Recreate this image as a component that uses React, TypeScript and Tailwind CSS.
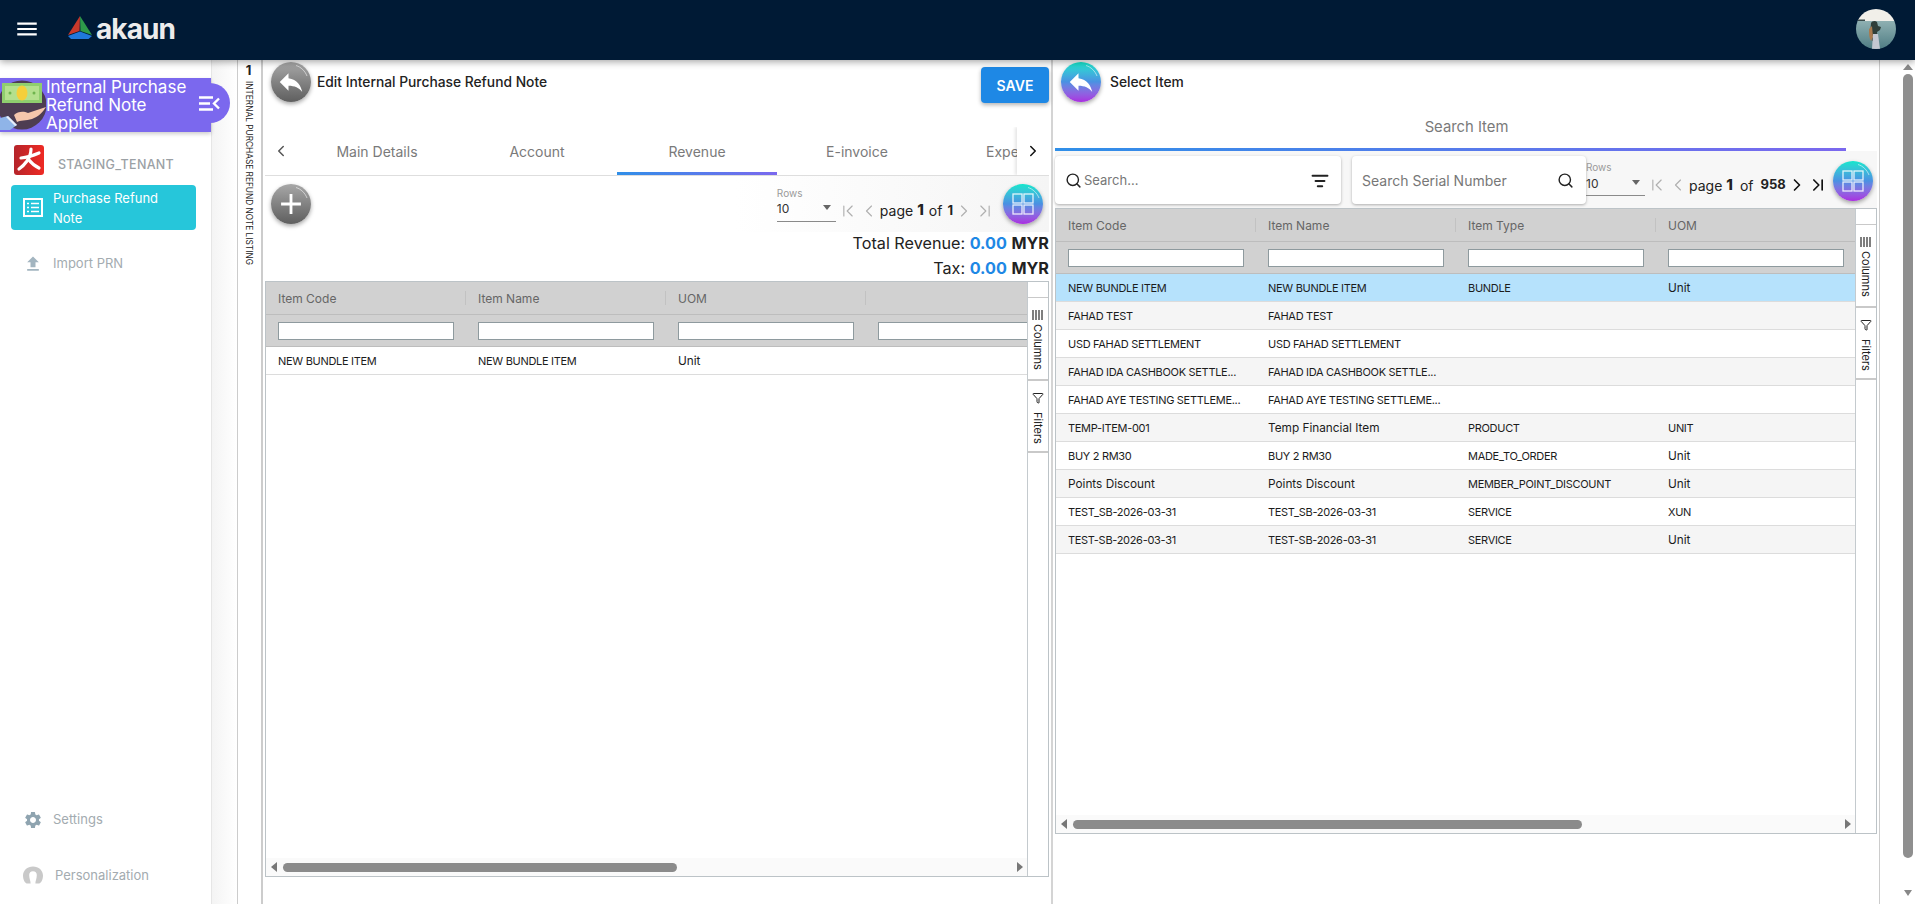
import { ChevronLeft, ChevronRight, ChevronFirst, ChevronLast, Search, ListFilter, Funnel } from 'lucide-react';
import { MdMenu, MdReply, MdAdd, MdFileUpload, MdSettings } from 'react-icons/md';

const leftRows = [['NEW BUNDLE ITEM', 'NEW BUNDLE ITEM', 'Unit', '']];

const rightRows = [
  ['NEW BUNDLE ITEM', 'NEW BUNDLE ITEM', 'BUNDLE', 'Unit'],
  ['FAHAD TEST', 'FAHAD TEST', '', ''],
  ['USD FAHAD SETTLEMENT', 'USD FAHAD SETTLEMENT', '', ''],
  ['FAHAD IDA CASHBOOK SETTLE...', 'FAHAD IDA CASHBOOK SETTLE...', '', ''],
  ['FAHAD AYE TESTING SETTLEME...', 'FAHAD AYE TESTING SETTLEME...', '', ''],
  ['TEMP-ITEM-001', 'Temp Financial Item', 'PRODUCT', 'UNIT'],
  ['BUY 2 RM30', 'BUY 2 RM30', 'MADE_TO_ORDER', 'Unit'],
  ['Points Discount', 'Points Discount', 'MEMBER_POINT_DISCOUNT', 'Unit'],
  ['TEST_SB-2026-03-31', 'TEST_SB-2026-03-31', 'SERVICE', 'XUN'],
  ['TEST-SB-2026-03-31', 'TEST-SB-2026-03-31', 'SERVICE', 'Unit'],
];

function RoundButton({ color, children }: { color: 'grey' | 'brand'; children: React.ReactNode }) {
  const bg = color === 'grey'
    ? 'bg-gradient-to-b from-[#a8a8a8] to-[#5f5f5f]'
    : 'bg-gradient-to-b from-[#10e6cc] via-[#4a90e2] to-[#a92be0]';
  return (
    <div className={`w-10 h-10 shrink-0 relative rounded-full flex items-center justify-center text-white shadow-[0_2px_4px_rgba(0,0,0,0.35)] ${bg}`}>
      {children}
      <svg width="40" height="40" viewBox="0 0 40 40" fill="none" stroke="#fff" strokeOpacity="0.55" strokeWidth="1" className="absolute left-0 top-0">
        <path d="M25 3.500c5 1.500 9 5.500 11 10.500" />
      </svg>
    </div>
  );
}

function GridIcon() {
  return (
    <svg width="24" height="24" viewBox="0 0 24 24" fill="none" stroke="#fff" strokeOpacity="0.85" strokeWidth="1.300">
      <rect x="2" y="2" width="9" height="9" />
      <rect x="13" y="2" width="9" height="9" />
      <rect x="2" y="13" width="9" height="9" />
      <rect x="13" y="13" width="9" height="9" />
    </svg>
  );
}

function Pager({ total, active, gap }: { total: string; active: boolean; gap: string }) {
  const end = active ? 'text-[#111]' : 'text-[#b0b0b0]';
  return (
    <div className="flex items-end shrink-0">
      <div className="w-[59px] mr-[2px]">
        <div className="text-[10px] leading-[12px] text-[#9a9a9a]">Rows</div>
        <div className="flex items-center justify-between h-[21px] mt-[2px] border-b border-[#8a8a8a] text-[12px] text-[#333] pr-[5px]">
          <span className="-mt-[3px]">10</span>
          <span className="w-0 h-0 -mt-[6px] border-l-[4px] border-r-[4px] border-t-[5px] border-l-transparent border-r-transparent border-t-[#666]" />
        </div>
      </div>
      <div className="flex items-center h-[24px] -mb-[1px] text-[14px] text-[#222]">
        <ChevronFirst size={20} strokeWidth={1.4} className="text-[#b0b0b0]" />
        <ChevronLeft size={20} strokeWidth={1.4} className="text-[#b0b0b0] ml-[1px]" />
        <span className="ml-[1px]">page</span>
        <b className="ml-[4px] font-extrabold text-[15px]">1</b>
        <span className={gap}>of</span>
        <b className={`${gap} font-bold text-[13px]`}>{total}</b>
        <ChevronRight size={20} strokeWidth={active ? 2 : 1.4} className={`${end} ml-[1px]`} />
        <ChevronLast size={20} strokeWidth={active ? 2 : 1.4} className={`${end} ml-[1px]`} />
      </div>
    </div>
  );
}

function SideButtons() {
  return (
    <div className="w-[21px] shrink-0 border-l border-[#c4cace] bg-white pt-[15px] text-[11px] text-[#222]">
      <div className="h-[84px] border-t border-b-2 border-[#c9c9c9] flex flex-col items-center pt-[12px] gap-[4px]">
        <svg width="12" height="10" viewBox="0 0 12 10" stroke="#555" strokeWidth="1.500"><path d="M1 0v10M4 0v10M7 0v10M10 0v10" /></svg>
        <span className="[writing-mode:vertical-rl]">Columns</span>
      </div>
      <div className="h-[72px] border-b-2 border-[#c9c9c9] flex flex-col items-center pt-[11px] gap-[8px]">
        <Funnel size={12} />
        <span className="[writing-mode:vertical-rl]">Filters</span>
      </div>
    </div>
  );
}

function HScroll({ width }: { width: string }) {
  return (
    <div className="mt-auto h-[18px] flex items-center bg-[#fafafa] pl-[5px] pr-[4px]">
      <span className="w-0 h-0 border-t-[5px] border-b-[5px] border-r-[6px] border-t-transparent border-b-transparent border-r-[#777]" />
      <div className={`h-[9px] ml-[6px] rounded-[5px] bg-[#8b8b8b] ${width}`} />
      <span className="ml-auto w-0 h-0 border-t-[5px] border-b-[5px] border-l-[6px] border-t-transparent border-b-transparent border-l-[#777]" />
    </div>
  );
}

function cellText(t: string) {
  return t === t.toUpperCase() ? 'text-[11px] tracking-[-0.3px]' : 'text-[11.800px]';
}

function DataGrid({ columns, rows, selected, thumb, height }: {
  columns: string[];
  rows: string[][];
  selected?: number;
  thumb: string;
  height: string;
}) {
  return (
    <div className={`flex border border-[#bcc3c7] overflow-hidden text-[12px] ${height}`}>
      <div className="flex-1 min-w-0 flex flex-col overflow-hidden">
        <div className="flex h-[33px] shrink-0 bg-[#d1d1d1] border-b border-[#bdbdbd] text-[#666]">
          {columns.map((c, i) => (
            <div key={i} className="w-[200px] shrink-0 px-[12px] pt-[2px] flex items-center relative">
              <span>{c}</span>
              <span className="absolute right-0 top-[9px] h-[14px] w-px bg-[#c2c2c2]" />
            </div>
          ))}
        </div>
        <div className="flex h-[32px] shrink-0 bg-[#d1d1d1] border-b border-[#bdbdbd]">
          {columns.map((_, i) => (
            <div key={i} className="w-[200px] shrink-0 px-[12px] flex items-center">
              <div className="w-[176px] h-[18px] bg-white border border-[#8e9a9e]" />
            </div>
          ))}
        </div>
        {rows.map((r, i) => (
          <div
            key={i}
            className={`flex h-[28px] shrink-0 border-b border-[#dcdcdc] text-[#1c1c1c] ${i === selected ? 'bg-[#b6e2fc]' : i % 2 === 1 ? 'bg-[#f5f5f5]' : 'bg-white'}`}
          >
            {r.map((t, j) => (
              <div key={j} className={`w-[200px] shrink-0 px-[12px] pt-[1px] leading-[16px] flex items-center whitespace-nowrap overflow-hidden ${cellText(t)}`}>{t}</div>
            ))}
          </div>
        ))}
        <HScroll width={thumb} />
      </div>
      <SideButtons />
    </div>
  );
}

function Tenant() {
  return (
    <svg width="30" height="30" viewBox="0 0 30 30" className="shrink-0">
      <defs>
        <linearGradient id="ten" x1="0" y1="0" x2="1" y2="0">
          <stop offset="0" stopColor="#b5242a" />
          <stop offset="1" stopColor="#ee2a24" />
        </linearGradient>
      </defs>
      <rect width="30" height="30" rx="3" fill="url(#ten)" />
      <g fill="none" stroke="#fff" strokeWidth="3.200" strokeLinecap="round">
        <path d="M17 4c0 5-2 9-4 12-2.500 3.500-5 6-8 8" />
        <path d="M7 13c5-.5 11-2 18-5" />
        <path d="M15 15c3 4 6 6 10 8" />
      </g>
    </svg>
  );
}

function MoneyHand() {
  return (
    <svg width="46" height="54" viewBox="0 0 46 54" className="shrink-0">
      <circle cx="22" cy="27" r="24.500" fill="#4e3d52" />
      <rect x="2" y="5" width="40" height="20" fill="#8fce6e" />
      <rect x="5" y="8" width="34" height="14" fill="#b4e08e" />
      <ellipse cx="22" cy="15" rx="5.500" ry="7.500" fill="#f5cf3a" />
      <circle cx="10" cy="15" r="1.500" fill="#6fb44e" />
      <circle cx="34" cy="15" r="1.500" fill="#6fb44e" />
      <path d="M14 37c4-4 10-4 14-2l6-2 12-4c-3 5-8 10-14 12-6 2-12 1-15 3z" fill="#f6c6ac" />
      <path d="M0 40l8-2 9 9-7 5H0z" fill="#8fb4e8" />
      <path d="M8 38l9 9-2 1-9-9z" fill="#e8eef8" />
    </svg>
  );
}

function Avatar() {
  return (
    <svg width="40" height="40" viewBox="0 0 40 40" className="shrink-0 -mt-[2px]">
      <defs>
        <clipPath id="av"><circle cx="20" cy="20" r="20" /></clipPath>
        <linearGradient id="sea" x1="0" y1="0" x2="0" y2="1">
          <stop offset="0" stopColor="#8fb0b2" />
          <stop offset="1" stopColor="#4f7d84" />
        </linearGradient>
      </defs>
      <g clipPath="url(#av)">
        <rect width="40" height="12" fill="#f1efe9" />
        <rect y="12" width="40" height="28" fill="url(#sea)" />
        <rect x="2" y="10.500" width="7" height="1.500" fill="#3a4a4a" />
        <path d="M15 14c1-2 4-3 6-1l1 4 3 1-1 3-3 2 1 8-6 1c-1-6-2-12-1-18z" fill="#2f3f3a" />
        <path d="M13 20c0 5 0 9 2 12l2-4-1-11z" fill="#a97a4e" />
        <path d="M17 25h5l2 15h-8z" fill="#c4c8d2" />
      </g>
    </svg>
  );
}

function NavItem({ icon, label, textClass }: { icon: React.ReactNode; label: string; textClass?: string }) {
  return (
    <div className="flex items-center pl-[23px] text-[13px] text-[#a3abb0]">
      <span className="w-[20px] flex justify-center">{icon}</span>
      <span className={textClass ?? 'ml-[10px]'}>{label}</span>
    </div>
  );
}

export default function App() {
  return (
    <div className="w-[1915px] h-[904px] overflow-hidden flex flex-col bg-white font-[family-name:Inter,sans-serif]">
      {/* Top bar */}
      <header className="h-[60px] shrink-0 bg-[#001a35] flex items-center relative z-10 shadow-[0_2px_7px_rgba(0,0,0,0.35)] pl-[14px] pr-[19px]">
        <MdMenu size={26} className="text-white -mt-[2px]" />
        <svg width="26" height="24" viewBox="0 0 26 24" className="ml-[27px] -mt-[5px]">
          <path d="M13 0L1 19l11.500-4z" fill="#c8392b" />
          <path d="M13 0l12 19-11.500-4z" fill="#2e9b4a" />
          <path d="M1 20l12-4.500L25 20l-3.500 3H4z" fill="#1f78dc" />
        </svg>
        <span className="ml-[3px] -mt-[3px] text-[28px] leading-none font-bold text-[#ececec] tracking-[-0.9px]">akaun</span>
        <div className="ml-auto"><Avatar /></div>
      </header>

      <div className="flex-1 flex min-h-0">
        {/* Sidebar */}
        <aside className="w-[212px] shrink-0 border-r border-[#e6e6e6] flex flex-col pt-[18px] pb-[19px]">
          <div className="h-[54px] w-[211px] shrink-0 bg-[#7b68ee] flex relative shadow-[0_2px_4px_rgba(0,0,0,0.2)]">
            <MoneyHand />
            <div className="text-white text-[17px] leading-[18px] whitespace-nowrap">Internal Purchase<br />Refund Note<br />Applet</div>
            <div className="absolute left-[195px] top-[5px] w-[35px] h-[40px] rounded-r-full bg-[#7b68ee] flex items-center justify-end pr-[10px]">
              <svg width="21" height="15" viewBox="0 0 21 15" fill="none" stroke="#fff" strokeWidth="2.400">
                <path d="M0 1.500h14M0 7.500h11M0 13.500h14M20 2.500l-5 5 5 5" />
              </svg>
            </div>
          </div>
          <div className="flex items-center pl-[14px] mt-[13px] h-[30px]">
            <Tenant />
            <span className="ml-[14px] mt-[11px] text-[12.500px] font-medium text-[#9ba1a5] tracking-[0.3px]">STAGING_TENANT</span>
          </div>
          <div className="ml-[11px] w-[185px] h-[45px] mt-[10px] rounded-[4px] bg-[#26c6da] flex items-center text-white">
            <svg width="20" height="19" viewBox="0 0 20 19" className="ml-[12px] mr-[10px]" fill="none" stroke="#fff">
              <rect x="1" y="1" width="18" height="17" strokeWidth="2" />
              <path d="M4 5.500h2M8 5.500h8M4 9.500h2M8 9.500h8M4 13.500h2M8 13.500h8" strokeWidth="1.700" />
            </svg>
            <span className="text-[13px] leading-[20px]">Purchase Refund<br />Note</span>
          </div>
          <div className="mt-[21px]">
            <NavItem icon={<MdFileUpload size={26} className="text-[#a3b5c0]" />} label="Import PRN" />
          </div>
          <div className="mt-auto">
            <NavItem icon={<MdSettings size={26} className="text-[#8fa4b0]" />} label="Settings" />
          </div>
          <div className="mt-[33px]">
            <NavItem
              label="Personalization"
              textClass="ml-[12px]"
              icon={
                <svg width="21" height="18" viewBox="0 0 21 18" fill="#c9c9c9">
                  <path d="M10.500 0C16.500 0 21 4 21 9.500 21 13 19.500 18 16 18H13c0-3 1.500-5 1.500-9 0-2.500-1.500-4-4-4s-4 1.500-4 4c0 4 1.500 6 1.500 9H5C1.500 18 0 13 0 9.500 0 4 4.500 0 10.500 0z" />
                </svg>
              }
            />
          </div>
        </aside>

        <div className="w-[25px] shrink-0 bg-gradient-to-r from-[#f4f4f4] to-white" />

        {/* Collapsed listing */}
        <div className="w-[26px] shrink-0 border-l border-r-2 border-[#cccccc] flex flex-col items-center pt-[3px] pr-[2px] text-[#222]">
          <b className="text-[13px] leading-[15px] font-bold">1</b>
          <span className="[writing-mode:vertical-rl] text-[8.300px] leading-[12px] mt-[3px] whitespace-nowrap">INTERNAL PURCHASE REFUND NOTE LISTING</span>
        </div>

        {/* Edit panel */}
        <section className="w-[790px] shrink-0 border-r-2 border-[#d4d4d4] px-[2px] flex flex-col">
          <div className="h-[67px] shrink-0 flex items-start pt-[2px] pl-[6px]">
            <RoundButton color="grey"><MdReply size={30} /></RoundButton>
            <span className="ml-[6px] mt-[10px] text-[13.800px] font-medium text-[#222]">Edit Internal Purchase Refund Note</span>
            <div className="ml-auto mt-[5px] w-[68px] h-[36px] rounded-[4px] bg-[#1e88e5] text-white text-[14px] font-semibold flex items-center justify-center shadow-[0_2px_4px_rgba(0,0,0,0.3)]">SAVE</div>
          </div>

          <div className="h-[49px] shrink-0 flex border-b border-[#dedede] text-[14px] text-[#7a7a7a] overflow-hidden">
            <div className="w-[32px] shrink-0 flex items-center justify-center"><ChevronLeft size={18} className="text-[#555]" /></div>
            {['Main Details', 'Account', 'Revenue', 'E-invoice'].map((t) => (
              <div
                key={t}
                className={`w-[160px] shrink-0 flex items-center justify-center ${t === 'Revenue' ? 'pt-[3px] border-b-[3px] [border-image:linear-gradient(to_right,#2f8fe8,#7b68ee)_1]' : ''}`}
              >
                {t}
              </div>
            ))}
            <div className="w-[80px] shrink-0 flex items-center pl-[49px] overflow-hidden whitespace-nowrap">Expenses</div>
            <div className="w-[32px] shrink-0 bg-white flex items-center justify-center shadow-[-2px_0_3px_rgba(0,0,0,0.1)] relative"><ChevronRight size={18} className="text-[#111]" /></div>
          </div>

          <div className="h-[56px] shrink-0 flex items-center pl-[6px] bg-gradient-to-r from-white from-60% to-[#f5f5f5]">
            <RoundButton color="grey"><MdAdd size={34} /></RoundButton>
            <div className="ml-auto flex items-center pr-[6px]">
              <Pager total="1" active={false} gap="ml-[5px]" />
              <div className="ml-[8px]"><RoundButton color="brand"><GridIcon /></RoundButton></div>
            </div>
          </div>

          <div className="h-[50px] shrink-0 text-right text-[16.200px] leading-[25px] text-[#222] -mt-[1px]">
            <div>Total Revenue: <b className="text-[#1e88e5]">0.00</b> <b>MYR</b></div>
            <div>Tax: <b className="text-[#1e88e5]">0.00</b> <b>MYR</b></div>
          </div>

          <DataGrid columns={['Item Code', 'Item Name', 'UOM', '']} rows={leftRows} thumb="w-[394px]" height="h-[596px]" />
        </section>

        {/* Select item panel */}
        <section className="w-[827px] shrink-0 border-r border-[#cccccc] px-[2px] flex flex-col">
          <div className="h-[43px] shrink-0 flex items-start pt-[2px] pl-[6px]">
            <RoundButton color="brand"><MdReply size={30} /></RoundButton>
            <span className="ml-[9px] mt-[10px] text-[13.800px] font-medium text-[#222]">Select Item</span>
          </div>
          <div className="h-[48px] w-[791px] pl-[32px] pt-[3px] shrink-0 flex items-center justify-center text-[14.800px] text-[#7a7a7a] border-b-[3px] [border-image:linear-gradient(to_right,#2f8fe8,#7b68ee)_1]">Search Item</div>

          <div className="h-[57px] shrink-0 flex items-start pt-[5px] bg-[#f7f7f7]">
            <div className="w-[286px] h-[48px] rounded-[4px] bg-white shadow-[0_1px_3px_rgba(0,0,0,0.3)] flex items-center pl-[10px] pr-[12px] pt-[1px] text-[13px] text-[#777]">
              <Search size={17} className="text-[#222]" />
              <span className="ml-[2px]">Search...</span>
              <ListFilter size={18} className="ml-auto text-[#222]" strokeWidth={2.500} />
            </div>
            <div className="ml-[11px] w-[234px] h-[48px] rounded-[4px] bg-white shadow-[0_1px_3px_rgba(0,0,0,0.3)] flex items-center pl-[10px] pr-[12px] pt-[1px] text-[14px] text-[#777] whitespace-nowrap">
              <span>Search Serial Number</span>
              <Search size={17} className="ml-auto text-[#222]" />
            </div>
            <div className="mt-[5px]"><Pager total="958" active gap="ml-[7px]" /></div>
            <div className="ml-auto mr-[4px] mt-[5px]"><RoundButton color="brand"><GridIcon /></RoundButton></div>
          </div>

          <DataGrid columns={['Item Code', 'Item Name', 'Item Type', 'UOM']} rows={rightRows} selected={0} thumb="w-[509px]" height="h-[626px]" />
        </section>

        {/* Page scrollbar */}
        <div className="flex-1 flex flex-col items-end pr-[2px] pt-[4px]">
          <div className="w-[10px] flex flex-col items-center h-full">
            <span className="w-0 h-0 border-l-[5px] border-r-[5px] border-b-[6px] border-l-transparent border-r-transparent border-b-[#888]" />
            <div className="w-[10px] h-[784px] mt-[4px] rounded-[5px] bg-[#8f8f8f]" />
            <span className="w-0 h-0 mt-[32px] border-l-[4px] border-r-[4px] border-t-[6px] border-l-transparent border-r-transparent border-t-[#888]" />
          </div>
        </div>
      </div>
    </div>
  );
}
